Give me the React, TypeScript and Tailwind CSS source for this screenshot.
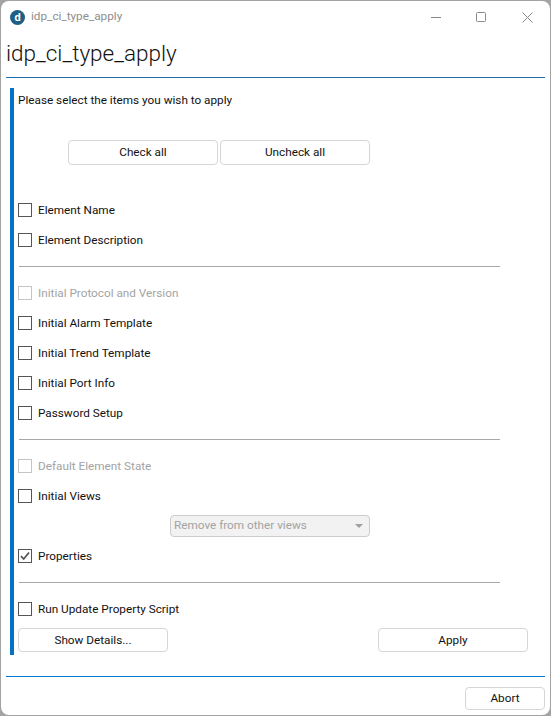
const font = { fontFamily: 'Roboto, "Noto Sans", sans-serif' };

function Check({ label, disabled, checked }: { label: string; disabled?: boolean; checked?: boolean }) {
  return (
    <div className="flex h-[30px] items-center">
      <div
        className={`flex h-[14px] w-[14px] items-center justify-center border ${
          disabled ? 'border-[#c4c4c4]' : 'border-[#555555]'
        }`}
      >
        {checked && (
          <svg width="10" height="10" viewBox="0 0 10 10">
            <path d="M1 5.2 L3.7 8 L9 1.5" fill="none" stroke="#555555" strokeWidth="1.8" />
          </svg>
        )}
      </div>
      <span className={`ml-[6px] pt-px text-[11.75px] ${disabled ? 'text-[#a3a3a3]' : 'text-[#111111]'}`}>{label}</span>
    </div>
  );
}

function Btn({ label, className }: { label: string; className?: string }) {
  return (
    <div
      className={`flex items-center justify-center rounded-[4px] border border-[#d6d6d6] bg-white pt-px text-[11.75px] text-[#111111] ${className}`}
    >
      {label}
    </div>
  );
}

function Divider({ className }: { className?: string }) {
  return <div className={`h-px w-[481px] bg-[#a8a8a8] ${className}`} />;
}

export default function App() {
  return (
    <div className="h-[716px] w-[551px] overflow-hidden bg-[#a3a3a3] p-px" style={font}>
      <div className="flex h-full flex-col rounded-[8px] bg-white">
        <div className="flex h-[32px] shrink-0 items-center pl-[9px]">
          <div className="flex h-[15px] w-[15px] items-center justify-center rounded-full bg-[#1f5f85] text-[11px] leading-none font-bold text-white">
            d
          </div>
          <span className="ml-[6px] text-[11.75px] text-[#8e8e8e]">idp_ci_type_apply</span>
          <div className="ml-auto flex items-center">
            <svg width="11" height="11" viewBox="0 0 11 11" className="mr-[34px] text-[#8a8a8a]">
              <path d="M0 5.5 H10" stroke="currentColor" strokeWidth="1" />
            </svg>
            <svg width="11" height="11" viewBox="0 0 11 11" className="mr-[35px] text-[#8a8a8a]">
              <rect x="0.5" y="0.5" width="9" height="9" rx="1" fill="none" stroke="currentColor" strokeWidth="1" />
            </svg>
            <svg width="11" height="11" viewBox="0 0 11 11" className="mr-[17px] text-[#8a8a8a]">
              <path d="M0.5 0.5 L10.5 10.5 M10.5 0.5 L0.5 10.5" stroke="currentColor" strokeWidth="1" />
            </svg>
          </div>
        </div>
        <div className="mx-[5px] flex h-[45px] shrink-0 items-center border-b border-[#1f6fa8] pb-[3px] text-[22.5px] font-light text-[#111111]">
          idp_ci_type_apply
        </div>
        <div className="mt-[10px] ml-[9px] flex h-[567px] w-[518px] shrink-0 flex-col border-l-4 border-[#0472c4] pl-[4px]">
          <div className="flex h-[24px] items-center pt-px text-[11.75px] text-[#111111]">
            Please select the items you wish to apply
          </div>
          <div className="mt-[28px] ml-[50px] flex gap-[2px]">
            <Btn label="Check all" className="h-[25px] w-[150px]" />
            <Btn label="Uncheck all" className="h-[25px] w-[150px]" />
          </div>
          <div className="mt-[30px]">
            <Check label="Element Name" />
            <Check label="Element Description" />
          </div>
          <Divider className="mt-[11px] mb-[11px] ml-px" />
          <Check label="Initial Protocol and Version" disabled />
          <Check label="Initial Alarm Template" />
          <Check label="Initial Trend Template" />
          <Check label="Initial Port Info" />
          <Check label="Password Setup" />
          <Divider className="mt-[11px] mb-[11px] ml-px" />
          <Check label="Default Element State" disabled />
          <Check label="Initial Views" />
          <div className="flex h-[30px] items-center pl-[152px]">
            <div className="flex h-[22px] w-[200px] items-center justify-between rounded-[4px] border border-[#cccccc] bg-[#f2f2f2] px-[3px] text-[11.75px] text-[#a3a3a3]">
              Remove from other views
              <span className="mr-[3px] h-0 w-0 border-x-[4px] border-t-[4px] border-x-transparent border-t-[#a0a0a0]" />
            </div>
          </div>
          <Check label="Properties" checked />
          <Divider className="mt-[11px] mb-[11px] ml-px" />
          <Check label="Run Update Property Script" />
          <div className="mt-[4px] flex justify-between">
            <Btn label="Show Details..." className="h-[24px] w-[150px]" />
            <Btn label="Apply" className="h-[24px] w-[150px]" />
          </div>
        </div>
        <div className="mx-[5px] mt-[21px] h-px shrink-0 bg-[#0078d4]" />
        <div className="mt-[10px] flex justify-end pr-[5px]">
          <Btn label="Abort" className="h-[23px] w-[80px]" />
        </div>
      </div>
    </div>
  );
}
